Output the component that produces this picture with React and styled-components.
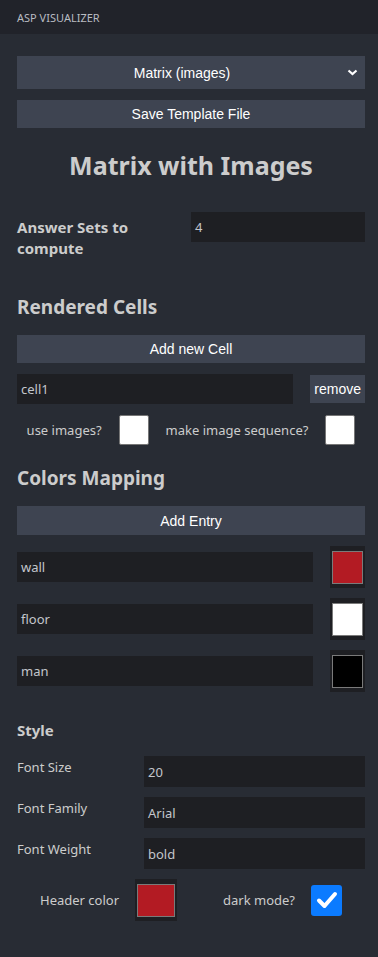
import React from 'react';
import styled, { createGlobalStyle } from 'styled-components';

const GlobalStyle = createGlobalStyle`
  html, body {
    margin: 0;
    padding: 0;
    background: #282c34;
  }
  body {
    font-family: 'Noto Sans', 'Open Sans', sans-serif;
    color: #cccccc;
  }
`;

const Sidebar = styled.div`
  width: 378px;
  min-height: 957px;
  background: #282c34;
`;

const TitleBar = styled.div`
  height: 34px;
  display: flex;
  align-items: center;
  padding: 0 17px;
  background: #21232a;
  font-size: 11px;
  color: #b9bcc2;
`;

const Content = styled.div`
  display: flex;
  flex-direction: column;
  padding: 22px 13px 0 17px;
`;

const SelectBox = styled.div`
  position: relative;
  height: 33px;
  display: flex;
  align-items: center;
  justify-content: center;
  padding-right: 18px;
  background: #3e4451;
  color: #ffffff;
  font-family: 'Liberation Sans', Arial, sans-serif;
  font-size: 14px;
`;

const Chevron = styled.svg`
  position: absolute;
  right: 7px;
  top: 13px;
`;

const Button = styled.button`
  display: block;
  width: ${(p) => (p.$auto ? 'auto' : '100%')};
  height: ${(p) => p.$h || 28}px;
  margin-top: ${(p) => p.$mt || 0}px;
  padding: 0 ${(p) => (p.$auto ? 4 : 0)}px;
  border: none;
  background: #3e4451;
  color: #ffffff;
  font-family: 'Liberation Sans', Arial, sans-serif;
  font-size: 14px;
  flex-shrink: 0;
`;

const Title = styled.h1`
  margin: 20px 0 0;
  text-align: center;
  font-size: 25px;
  font-weight: 700;
  line-height: 34px;
  color: #cccccc;
`;

const TwoCol = styled.div`
  display: grid;
  grid-template-columns: ${(p) => p.$cols};
  align-items: start;
  margin-top: ${(p) => p.$mt || 0}px;
`;

const BoldLabel = styled.div`
  font-size: 15px;
  font-weight: 700;
  line-height: 21px;
  padding-top: 5px;
  max-width: 150px;
`;

const Input = styled.div`
  height: ${(p) => p.$h || 30}px;
  display: flex;
  align-items: center;
  padding: 0 4px;
  background: #1e1f23;
  color: #c3c6cc;
  font-size: 13px;
  flex: 1;
  min-width: 0;
`;

const Heading = styled.h2`
  margin: ${(p) => p.$mt}px 0 0;
  font-size: ${(p) => p.$size || 19}px;
  font-weight: 700;
  line-height: 28px;
  color: #cccccc;
`;

const Row = styled.div`
  display: flex;
  align-items: center;
  gap: 17px;
  margin-top: ${(p) => p.$mt || 0}px;
`;

const CheckRow = styled.div`
  display: flex;
  align-items: center;
  justify-content: center;
  gap: ${(p) => p.$gap || 17}px;
  margin-top: ${(p) => p.$mt || 0}px;
  font-size: 13px;
  color: #cccccc;
`;

const Group = styled.div`
  display: flex;
  align-items: center;
  gap: 16px;
`;

const WhiteBox = styled.div`
  width: 28px;
  height: 28px;
  background: #ffffff;
  border: 1px solid #767676;
  border-radius: 2px;
`;

const Swatch = styled.div`
  flex-shrink: 0;
  width: ${(p) => p.$w || 35}px;
  height: 42px;
  padding: 5px 2px 4px;
  box-sizing: border-box;
  background: #1e1f23;
  display: flex;
  align-items: center;
  justify-content: center;
  & > span {
    display: block;
    width: 100%;
    height: 100%;
    box-sizing: border-box;
    border: 1px solid #7a7a7a;
    background: ${(p) => p.$color};
  }
`;

const StyleLabel = styled.div`
  font-size: 13px;
  line-height: 20px;
  padding-top: 1px;
`;

const CheckedBox = styled.div`
  width: 31px;
  height: 31px;
  border-radius: 3px;
  background: #0b7bff;
  display: flex;
  align-items: center;
  justify-content: center;
`;

export default function App() {
  const colors = [
    { name: 'wall', color: '#b31b23' },
    { name: 'floor', color: '#ffffff' },
    { name: 'man', color: '#000000' },
  ];
  const styleFields = [
    ['Font Size', '20'],
    ['Font Family', 'Arial'],
    ['Font Weight', 'bold'],
  ];

  return (
    <Sidebar>
      <GlobalStyle />
      <TitleBar>ASP VISUALIZER</TitleBar>
      <Content>
        <SelectBox>
          Matrix (images)
          <Chevron width="11" height="7" viewBox="0 0 11 7">
            <path d="M1.5 1.5 L5.5 5 L9.5 1.5" stroke="#fff" strokeWidth="2.2" fill="none" />
          </Chevron>
        </SelectBox>
        <Button $mt={11}>Save Template File</Button>
        <Title>Matrix with Images</Title>

        <TwoCol $cols="174px 1fr" $mt={30}>
          <BoldLabel>Answer Sets to compute</BoldLabel>
          <Input>4</Input>
        </TwoCol>

        <Heading $mt={34}>Rendered Cells</Heading>
        <Button $mt={14}>Add new Cell</Button>
        <Row $mt={11}>
          <Input>cell1</Input>
          <Button $auto $h={28}>remove</Button>
        </Row>
        <CheckRow $mt={11}>
          <span>use images?</span>
          <WhiteBox />
          <span>make image sequence?</span>
          <WhiteBox />
        </CheckRow>

        <Heading $mt={19}>Colors Mapping</Heading>
        <Button $mt={14} $h={29}>Add Entry</Button>
        {colors.map((c, i) => (
          <Row key={c.name} $mt={i === 0 ? 11 : 10}>
            <Input $h={30}>{c.name}</Input>
            <Swatch $color={c.color}>
              <span />
            </Swatch>
          </Row>
        ))}

        <Heading $mt={24} $size={15}>Style</Heading>
        {styleFields.map(([label, value], i) => (
          <TwoCol key={label} $cols="127px 1fr" $mt={i === 0 ? 12 : 10}>
            <StyleLabel>{label}</StyleLabel>
            <Input $h={31}>{value}</Input>
          </TwoCol>
        ))}
        <CheckRow $mt={10} $gap={46}>
          <Group>
            <span>Header color</span>
            <Swatch $color="#b31b23" $w={42}>
              <span />
            </Swatch>
          </Group>
          <Group>
            <span>dark mode?</span>
            <CheckedBox>
              <svg width="22" height="20" viewBox="0 0 22 20">
                <path d="M3 10.5 L8.5 16 L19 4" stroke="#fff" strokeWidth="4" fill="none" strokeLinecap="round" strokeLinejoin="round" />
              </svg>
            </CheckedBox>
          </Group>
        </CheckRow>
      </Content>
    </Sidebar>
  );
}
